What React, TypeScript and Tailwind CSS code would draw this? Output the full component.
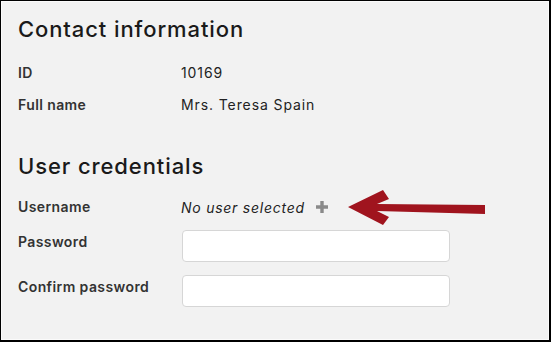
import React from "react";

export default function App() {
  return (
    <div className="w-[551px] h-[342px] border-l border-t border-r-2 border-b-2 border-black bg-white" style={{ fontFamily: "Inter, 'Noto Sans', sans-serif" }}>
      <div className="w-full h-full border border-[#fbfbfb] bg-[#f2f2f2] relative">
        <div className="pl-[16px] pt-[11px]">
          <h1 className="text-[22px] leading-[32px] font-medium text-[#1a1a1a] tracking-[0.9px]">Contact information</h1>
          <div className="mt-[12px] grid grid-cols-[163px_1fr] text-[14px] leading-[32px]">
            <div className="font-semibold text-[#333] tracking-[0.4px]">ID</div>
            <div className="text-[#222] tracking-[0.9px]">10169</div>
            <div className="font-semibold text-[#333] tracking-[0.4px]">Full name</div>
            <div className="text-[#222] tracking-[0.9px]">Mrs. Teresa Spain</div>
          </div>
          <h2 className="mt-[29px] text-[22px] leading-[32px] font-medium text-[#1a1a1a] tracking-[0.9px]">User credentials</h2>
          <div className="mt-[9px] grid grid-cols-[163px_1fr] text-[14px]">
            <div className="font-semibold text-[#333] leading-[32px] tracking-[0.4px]">Username</div>
            <div className="flex items-center h-[32px] text-[#222] italic tracking-[0.75px]">
              <span>No user selected</span>
              <svg className="ml-[11px]" width="12" height="12" viewBox="0 0 12 12">
                <path d="M4.3 0h3.4v4.3H12v3.4H7.7V12H4.3V7.7H0V4.3h4.3z" fill="#8a8a8a" />
              </svg>
            </div>
            <div className="mt-[7px] font-semibold text-[#333] leading-[24px] tracking-[0.4px]">Password</div>
            <div className="mt-[7px] ml-[1px] w-[268px] h-[32px] bg-white border border-[#d6d6d6] rounded-[4px]"></div>
            <div className="mt-[13px] font-semibold text-[#333] leading-[24px] tracking-[0.4px]">Confirm password</div>
            <div className="mt-[13px] ml-[1px] w-[268px] h-[32px] bg-white border border-[#d6d6d6] rounded-[4px]"></div>
          </div>
        </div>
        <svg className="absolute left-0 top-0" width="551" height="342" viewBox="0 0 551 342" style={{ pointerEvents: "none" }}>
          <polygon points="347,206 382,189 388,198 376,203 484,204 484,213 376,210 388,216 382,224" fill="#a0141e" transform="translate(-1,-1)" />
        </svg>
      </div>
    </div>
  );
}
